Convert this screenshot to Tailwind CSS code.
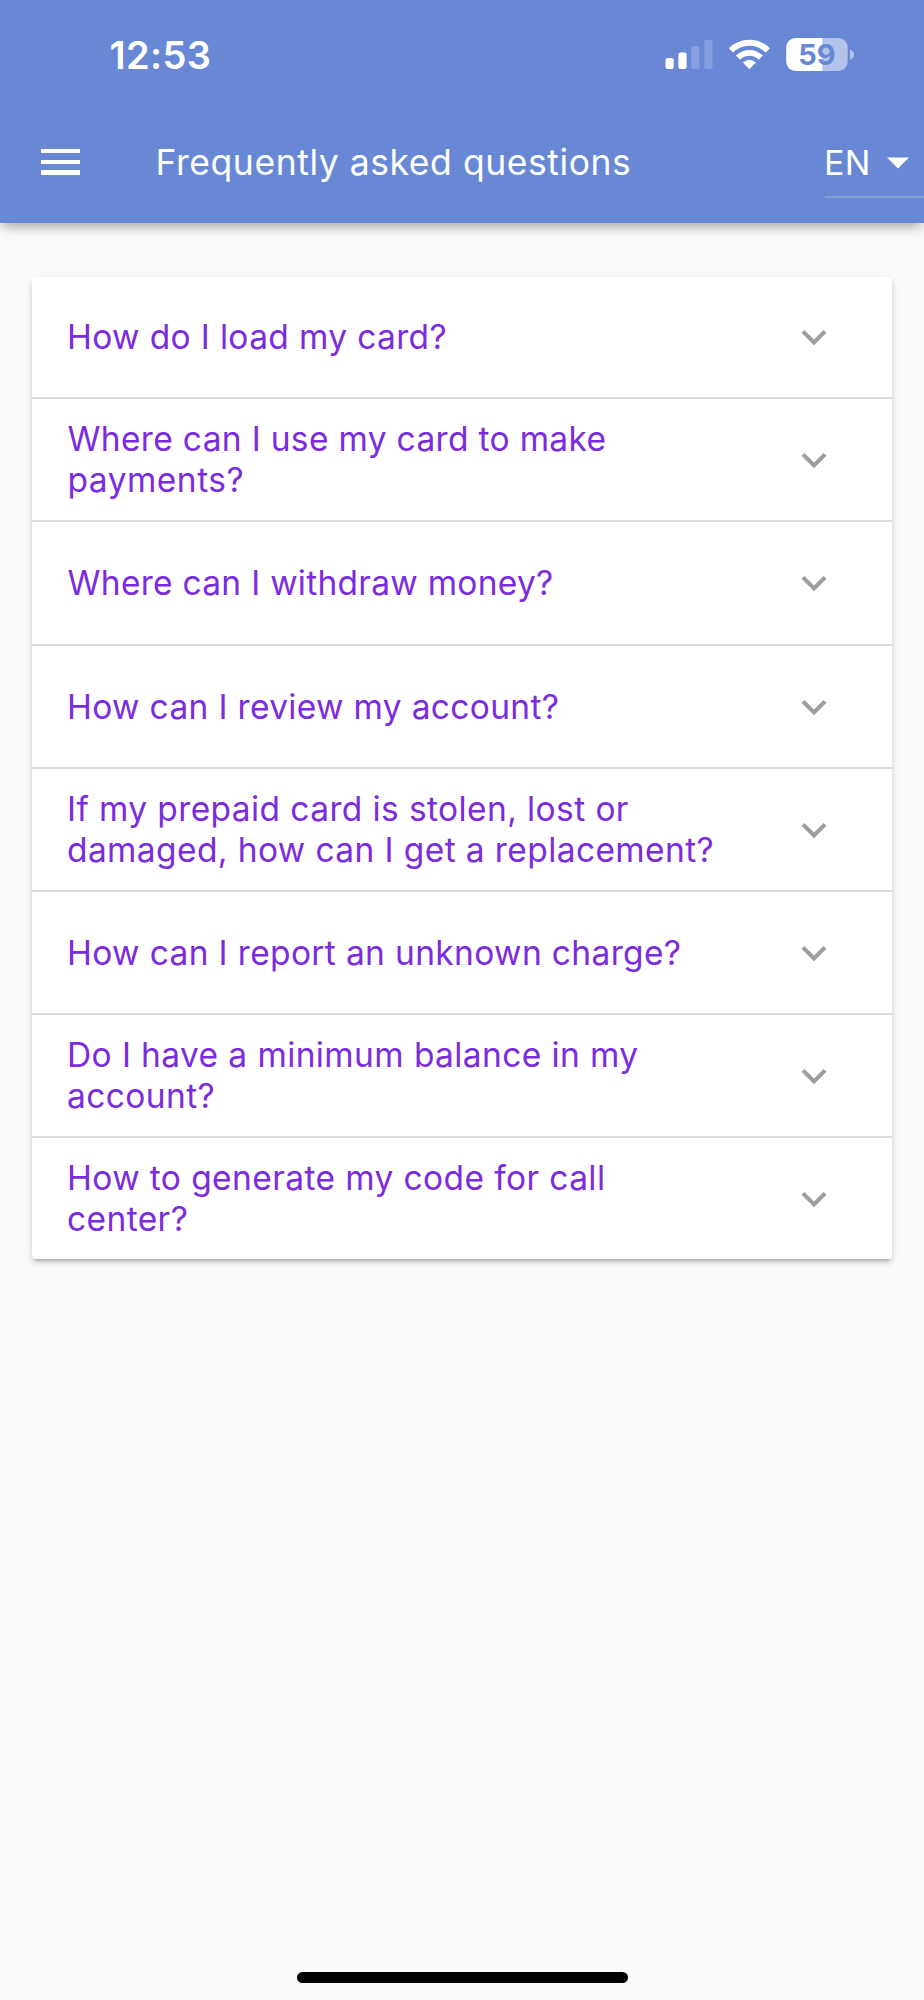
<!DOCTYPE html>
<html lang="en">
<head>
<meta charset="utf-8">
<title>Frequently asked questions</title>
<script src="https://cdn.jsdelivr.net/npm/@tailwindcss/browser@4"></script>
</head>
<body class="w-[924px] h-[2000px] bg-[#fafafa] font-['Inter',sans-serif] flex flex-col overflow-hidden">
<svg class="hidden">
  <symbol id="chevron" viewBox="0 0 24 24"><path fill="currentColor" d="M16.59 8.59 12 13.17 7.41 8.59 6 10l6 6 6-6z"/></symbol>
</svg>
<header class="h-[222.5px] shrink-0 bg-[#6888d6] text-white shadow-[0_6px_12px_-3px_rgba(0,0,0,0.34),0_2px_14px_rgba(0,0,0,0.06)] flex flex-col">
  <div class="h-[110px] pl-[109.5px] pr-[64px] flex items-center justify-between">
    <time class="text-[38px] font-semibold leading-none tracking-[0.4px]">12:53</time>
    <svg class="w-[200px] h-[50px]" viewBox="660 30 200 50" fill="none">
      <rect x="665.5" y="58" width="8.2" height="11" rx="2" fill="#fff"/>
      <rect x="678.4" y="52.6" width="8.2" height="16.4" rx="2" fill="#fff"/>
      <rect x="691.3" y="46" width="8.2" height="23" rx="2" fill="#fff" fill-opacity=".2"/>
      <rect x="704.3" y="39.7" width="8.2" height="29.3" rx="2" fill="#fff" fill-opacity=".2"/>
      <path d="M731 50.4A26 26 0 0 1 767.8 50.4" stroke="#fff" stroke-width="6"/>
      <path d="M738 57.6A16 16 0 0 1 760.8 57.6" stroke="#fff" stroke-width="5.8"/>
      <path d="M742.8 62.6Q749.4 57 756 62.6L749.4 69.3z" fill="#fff"/>
      <clipPath id="battery"><rect x="786.3" y="38" width="61.4" height="33" rx="9.5"/></clipPath>
      <g clip-path="url(#battery)">
        <rect x="786" y="38" width="62" height="33" fill="#b4c3ea"/>
        <rect x="786" y="38" width="36.2" height="33" fill="#fff"/>
      </g>
      <path d="M850 49.5Q854 51 854 54.5T850 59.5z" fill="#b4c3ea"/>
      <text x="817" y="65.1" text-anchor="middle" font-size="29" font-weight="700" fill="#6888d6">59</text>
    </svg>
  </div>
  <div class="h-[112px] pl-[41px] flex items-start">
    <button class="mt-[39px] flex flex-col gap-[6.5px]" aria-label="Menu">
      <span class="block w-[39px] h-[4.2px] bg-white"></span>
      <span class="block w-[39px] h-[4.2px] bg-white"></span>
      <span class="block w-[39px] h-[4.2px] bg-white"></span>
    </button>
    <h1 class="ml-[75.5px] mt-[33px] text-[35.5px] leading-[40px] tracking-[0.56px] whitespace-nowrap">Frequently asked questions</h1>
    <div class="ml-auto w-[99px] h-[88px] pt-[33px] pr-[15px] border-b-2 border-[#869cd4] flex items-start justify-between">
      <span class="-ml-px text-[34px] leading-[40px] tracking-[0.3px]">EN</span>
      <svg class="mt-[14px] w-[22px] h-[12px]" viewBox="0 0 22 12"><path d="M0 .5h22L11 11.5z" fill="#fff"/></svg>
    </div>
  </div>
</header>
<main class="px-8 pt-[54.5px]">
  <ul class="bg-white rounded-[4px] text-[33.5px] leading-[41px] text-[#7b2be0] tracking-[0.4px] whitespace-nowrap shadow-[0_5px_2px_-3px_rgba(0,0,0,0.14),0_4px_5px_rgba(0,0,0,0.12),0_2px_9px_rgba(0,0,0,0.08)]">
    <li class="h-[122px] border-b-2 border-[#dcdcdc] pl-[35px] pr-[53px] flex items-center justify-between"><span class="mt-px tracking-[0.36px]">How do I load my card?</span><svg class="size-[50px] text-[#9e9e9e]"><use href="#chevron"/></svg></li>
    <li class="h-[123px] border-b-2 border-[#dcdcdc] pl-[35.5px] pr-[53px] flex items-center justify-between"><span class="mt-px"><span class="tracking-[0.33px]">Where can I use my card to make</span><br><span class="tracking-[0.5px]">payments?</span></span><svg class="size-[50px] text-[#9e9e9e]"><use href="#chevron"/></svg></li>
    <li class="h-[124px] border-b-2 border-[#dcdcdc] pl-[35.5px] pr-[53px] flex items-center justify-between"><span class="mt-px tracking-[0.28px]">Where can I withdraw money?</span><svg class="size-[50px] text-[#9e9e9e]"><use href="#chevron"/></svg></li>
    <li class="h-[123px] border-b-2 border-[#dcdcdc] pl-[35px] pr-[53px] flex items-center justify-between"><span class="mt-px tracking-[0.34px]">How can I review my account?</span><svg class="size-[50px] text-[#9e9e9e]"><use href="#chevron"/></svg></li>
    <li class="h-[123px] border-b-2 border-[#dcdcdc] pl-[35px] pr-[53px] flex items-center justify-between"><span>If my prepaid card is stolen, lost or<br>damaged, how can I get a replacement?</span><svg class="size-[50px] text-[#9e9e9e]"><use href="#chevron"/></svg></li>
    <li class="h-[123px] border-b-2 border-[#dcdcdc] pl-[35px] pr-[53px] flex items-center justify-between"><span class="mt-px tracking-[0.36px]">How can I report an unknown charge?</span><svg class="size-[50px] text-[#9e9e9e]"><use href="#chevron"/></svg></li>
    <li class="h-[123px] border-b-2 border-[#dcdcdc] pl-[35px] pr-[53px] flex items-center justify-between"><span>Do I have a minimum balance in my<br>account?</span><svg class="size-[50px] text-[#9e9e9e]"><use href="#chevron"/></svg></li>
    <li class="h-[121px] pl-[35px] pr-[53px] flex items-center justify-between"><span>How to generate my code for call<br>center?</span><svg class="size-[50px] text-[#9e9e9e]"><use href="#chevron"/></svg></li>
  </ul>
</main>
<div class="mt-auto mb-[17px] mx-auto w-[331px] h-[11px] rounded-full bg-black"></div>
</body>
</html>
